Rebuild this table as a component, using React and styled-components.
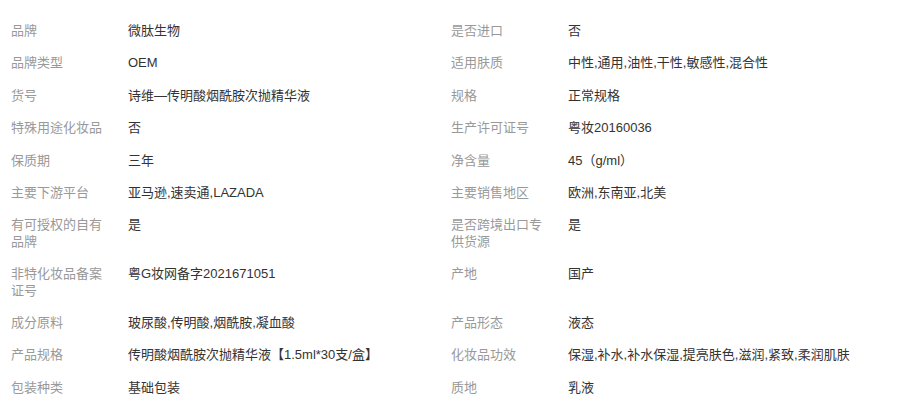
import React from "react";
import styled, { createGlobalStyle } from "styled-components";

const GlobalStyle = createGlobalStyle`
  html, body {
    margin: 0;
    padding: 0;
    background: #fff;
  }
  body {
    font-family: "Liberation Sans", Arial, "Noto Sans CJK SC", sans-serif;
  }
`;

const Table = styled.div`
  display: grid;
  grid-template-columns: 440px 440px;
  padding: 15px 0 0 11px;
`;

const Item = styled.div`
  display: flex;
  align-items: flex-start;
  padding: 8px 0;
  font-size: 13px;
  line-height: 16.4px;
`;

const Label = styled.div`
  flex: 0 0 97px;
  padding-right: 20px;
  color: #999;
  word-break: break-all;
`;

const Value = styled.div`
  flex: 1;
  color: #333;
  white-space: nowrap;
`;

const rows = [
  ["品牌", "微肽生物"],
  ["是否进口", "否"],
  ["品牌类型", "OEM"],
  ["适用肤质", "中性,通用,油性,干性,敏感性,混合性"],
  ["货号", "诗维—传明酸烟酰胺次抛精华液"],
  ["规格", "正常规格"],
  ["特殊用途化妆品", "否"],
  ["生产许可证号", "粤妆20160036"],
  ["保质期", "三年"],
  ["净含量", "45（g/ml）"],
  ["主要下游平台", "亚马逊,速卖通,LAZADA"],
  ["主要销售地区", "欧洲,东南亚,北美"],
  ["有可授权的自有品牌", "是"],
  ["是否跨境出口专供货源", "是"],
  ["非特化妆品备案证号", "粤G妆网备字2021671051"],
  ["产地", "国产"],
  ["成分原料", "玻尿酸,传明酸,烟酰胺,凝血酸"],
  ["产品形态", "液态"],
  ["产品规格", "传明酸烟酰胺次抛精华液【1.5ml*30支/盒】"],
  ["化妆品功效", "保湿,补水,补水保湿,提亮肤色,滋润,紧致,柔润肌肤"],
  ["包装种类", "基础包装"],
  ["质地", "乳液"],
];

export default function App() {
  return (
    <>
      <GlobalStyle />
      <Table>
        {rows.map(([label, value]) => (
          <Item key={label}>
            <Label>{label}</Label>
            <Value>{value}</Value>
          </Item>
        ))}
      </Table>
    </>
  );
}
